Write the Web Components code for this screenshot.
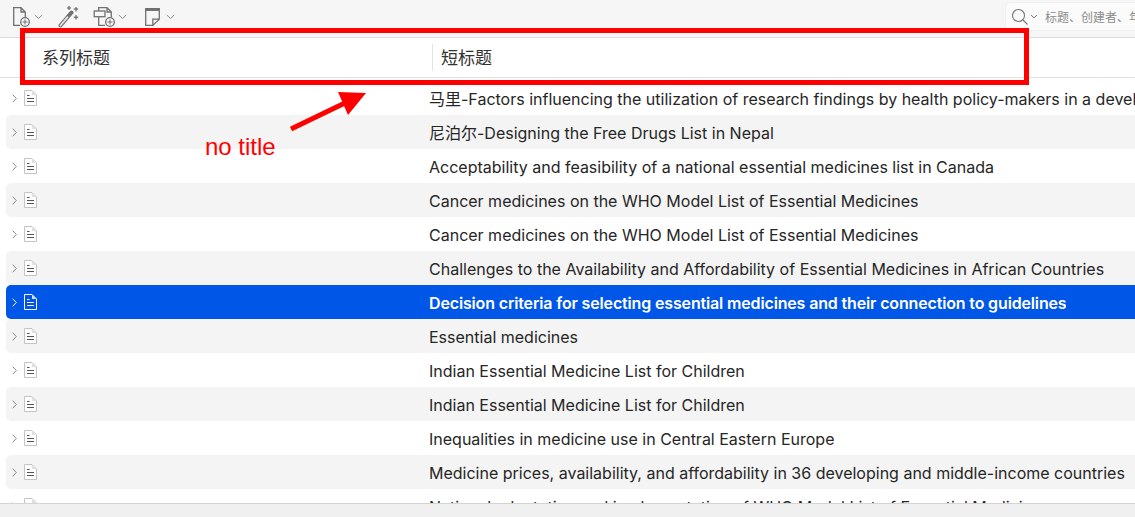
<!DOCTYPE html>
<html lang="zh">
<head>
<meta charset="utf-8">
<title>Library list</title>
<style>
  html, body { margin: 0; height: 517px; overflow: hidden; background: #fff; }
  body { font-family: Inter, "Noto Sans CJK SC", sans-serif; color: #262626; }
  app-shell { height: 517px; }
</style>
</head>
<body>
<app-shell>
  <app-toolbar></app-toolbar>
  <column-header></column-header>
  <ref-list>
    <ref-row>马里-Factors influencing the utilization of research findings by health policy-makers in a developing country</ref-row>
    <ref-row>尼泊尔-Designing the Free Drugs List in Nepal</ref-row>
    <ref-row>Acceptability and feasibility of a national essential medicines list in Canada</ref-row>
    <ref-row>Cancer medicines on the WHO Model List of Essential Medicines</ref-row>
    <ref-row>Cancer medicines on the WHO Model List of Essential Medicines</ref-row>
    <ref-row>Challenges to the Availability and Affordability of Essential Medicines in African Countries</ref-row>
    <ref-row selected>Decision criteria for selecting essential medicines and their connection to guidelines</ref-row>
    <ref-row>Essential medicines</ref-row>
    <ref-row>Indian Essential Medicine List for Children</ref-row>
    <ref-row>Indian Essential Medicine List for Children</ref-row>
    <ref-row>Inequalities in medicine use in Central Eastern Europe</ref-row>
    <ref-row>Medicine prices, availability, and affordability in 36 developing and middle-income countries</ref-row>
    <ref-row>National adaptation and implementation of WHO Model List of Essential Medicines</ref-row>
  </ref-list>
  <status-bar></status-bar>
  <note-overlay></note-overlay>
</app-shell>

<script>
class AppShell extends HTMLElement {
  constructor() {
    super();
    this.attachShadow({ mode: 'open' });
    this.shadowRoot.innerHTML = `
      <style>
        :host { display: flex; flex-direction: column; position: relative; overflow: hidden; }
      </style>
      <slot></slot>`;
  }
}

class AppToolbar extends HTMLElement {
  constructor() {
    super();
    this.attachShadow({ mode: 'open' });
    const chev = `<svg width="9" height="6" viewBox="0 0 9 6"><path d="M.8 1l3.700 3.500L8.200 1" fill="none" stroke="#8a8a8a" stroke-width="1"/></svg>`;
    this.shadowRoot.innerHTML = `
      <style>
        :host { display: flex; align-items: flex-start; justify-content: space-between; height: 37px; background: #f6f6f6; border-bottom: 1px solid #dcdcdc; flex: none; }
        .tools { display: flex; align-items: center; padding: 6px 0 0 12px; }
        .tool { display: flex; align-items: center; gap: 3px; }
        .tool svg { display: block; }
        .search { display: flex; align-items: center; width: 129px; height: 27px; margin-top: 3px; box-sizing: border-box; padding-left: 5px; background: #fbfbfb; border-radius: 5px 0 0 5px; box-shadow: 0 0 0 1px #f0f0f0; overflow: hidden; }
        .search svg { flex: none; }
        .search span { flex: none; font: 12px "Noto Sans CJK SC", sans-serif; color: #8c8c8c; white-space: nowrap; margin-left: 7px; }
      </style>
      <div class="tools">
        <div class="tool">
          <svg width="19" height="22" viewBox="0 0 19 22" fill="none" stroke="#707070" stroke-width="1.300">
            <path d="M8 19.400H1.700V1.700H9L13.300 6v5M9 1.700V6h4.300"/>
            <circle cx="13" cy="16" r="4.300"/><path d="M13 13.500v5M10.500 16h5" stroke-width="1"/>
          </svg>${chev}
        </div>
        <div class="tool" style="margin-left:14px">
          <svg width="22" height="22" viewBox="0 0 22 22" fill="none">
            <path d="M3.500 19.500L14.500 6.500" stroke="#707070" stroke-width="4" stroke-linecap="round"/>
            <path d="M3.500 19.500L10.500 11.200" stroke="#e4e4e4" stroke-width="1.800" stroke-linecap="round"/>
            <path d="M12 0v4M10 2h4M19 1v4.500M16.800 3h4.400M19 9v4.500M16.800 11.200h4.400" stroke="#555" stroke-width="1"/>
          </svg>
        </div>
        <div class="tool" style="margin-left:14px">
          <svg width="22" height="22" viewBox="0 0 22 22" fill="none" stroke="#707070" stroke-width="1.300">
            <path d="M12 19.400H5.700V11M5.700 5V1.700H14L18.300 6v5M14 1.700V6h4.300"/>
            <rect x="1.200" y="5" width="10.800" height="5.700"/>
            <circle cx="17" cy="16" r="4.300"/><path d="M17 13.500v5M14.500 16h5" stroke-width="1"/>
          </svg>${chev}
        </div>
        <div class="tool" style="margin-left:17px;gap:5px">
          <svg width="17" height="22" viewBox="0 0 17 22" fill="none" stroke="#707070" stroke-width="1.300">
            <path d="M1.700 2.700h13.600v10.500l-6.500 6.200H1.700zM8.800 19.400V13.200h6.500"/>
            <path d="M1.700 3.700h13.600" stroke-width="2.500"/>
          </svg>${chev}
        </div>
      </div>
      <div class="search">
        <svg width="18" height="18" viewBox="0 0 18 18" fill="none" stroke="#777" stroke-width="1.100"><circle cx="7.500" cy="7.500" r="6"/><path d="M12 12l4.500 4.500"/></svg>
        <svg width="8" height="5" viewBox="0 0 8 5" style="margin-left:1px"><path d="M1 1l3 2.800L7 1" fill="none" stroke="#777"/></svg>
        <span>标题、创建者、年</span>
      </div>`;
  }
}

class ColumnHeader extends HTMLElement {
  constructor() {
    super();
    this.attachShadow({ mode: 'open' });
    this.shadowRoot.innerHTML = `
      <style>
        :host { display: grid; grid-template-columns: 432px 1fr; align-items: center; height: 39px; background: #fff; border-bottom: 1px solid #e2e2e2; flex: none; font: 17px "Noto Sans CJK SC", sans-serif; color: #333; }
        div { height: 27px; line-height: 25px; }
        .a { padding-left: 42px; }
        .b { padding-left: 8px; border-left: 1px solid #e2e2e2; }
      </style>
      <div class="a">系列标题</div>
      <div class="b">短标题</div>`;
  }
}

class RefList extends HTMLElement {
  constructor() {
    super();
    this.attachShadow({ mode: 'open' });
    this.shadowRoot.innerHTML = `
      <style>
        :host { display: flex; flex-direction: column; flex: 1; min-height: 0; overflow: hidden; padding: 3px 0 0 6px; background: #fff; }
        ::slotted(ref-row:nth-child(even)) { background: #f4f4f4; }
        ::slotted(ref-row[selected]) { background: #0057e7; color: #fff; font-weight: 600; letter-spacing: -.15px; }
      </style>
      <slot></slot>`;
  }
}

class RefRow extends HTMLElement {
  constructor() {
    super();
    this.attachShadow({ mode: 'open' });
    const selected = this.hasAttribute('selected');
    const line = selected ? '#fff' : '#555';
    const edge = selected ? '#fff' : '#c4c4c4';
    const fold = selected ? '#cfe0ff' : '#e0e0e0';
    const paper = selected ? 'none' : '#fff';
    this.shadowRoot.innerHTML = `
      <style>
        :host { display: flex; align-items: flex-start; flex: none; height: 34px; border-radius: 5px 0 0 5px; font-size: 16px; white-space: nowrap; color: #262626; }
        svg { flex: none; }
        .chev { margin: 13px 0 0 6px; }
        .doc { margin: 9px 0 0 7px; }
        .title { margin-left: 392px; height: 34px; line-height: 36px; overflow: hidden; font-family: Inter, "Noto Sans CJK SC", sans-serif; }
      </style>
      <svg class="chev" width="5" height="9" viewBox="0 0 5 9"><path d="M.7.700L4.300 4.500.700 8.300" fill="none" stroke="${selected ? '#fff' : '#888'}" stroke-width="1"/></svg>
      <svg class="doc" width="13" height="16" viewBox="0 0 13 16">
        <path d="M.5.500H8L12.500 5v10.500H.500z" fill="${paper}" stroke="${edge}"/>
        <path d="M8 .5V5h4.500z" fill="${fold}"/>
        <path d="M3 5.500h2.500M3 8.500h7M3 11.500h7" stroke="${line}" stroke-width="1"/>
      </svg>
      <span class="title"><slot></slot></span>`;
  }
}

class StatusBar extends HTMLElement {
  constructor() {
    super();
    this.attachShadow({ mode: 'open' });
    this.shadowRoot.innerHTML = `
      <style>
        :host { display: block; height: 13px; flex: none; background: #f0f0f0; border-top: 1px solid #d4d4d4; }
      </style>`;
  }
}

// red markup drawn over the screenshot: box, arrow and the caption
class NoteOverlay extends HTMLElement {
  constructor() {
    super();
    this.attachShadow({ mode: 'open' });
    this.shadowRoot.innerHTML = `
      <style>
        :host { position: absolute; inset: 0; pointer-events: none; }
        .box { position: absolute; left: 20px; top: 28px; width: 1009px; height: 57px; box-sizing: border-box; border: 5px solid #ff0000; }
        svg { position: absolute; left: 285px; top: 88px; }
        .cap { position: absolute; left: 205px; top: 133px; font: 24px/28px "Liberation Sans", sans-serif; color: #ff0000; }
      </style>
      <div class="box"></div>
      <svg width="85" height="46" viewBox="0 0 85 46">
        <path d="M6 41L62 14" stroke="#ff0000" stroke-width="5"/>
        <path d="M53 4L81 5 63 27z" fill="#ff0000"/>
      </svg>
      <div class="cap">no title</div>`;
  }
}

customElements.define('app-shell', AppShell);
customElements.define('app-toolbar', AppToolbar);
customElements.define('column-header', ColumnHeader);
customElements.define('ref-list', RefList);
customElements.define('ref-row', RefRow);
customElements.define('status-bar', StatusBar);
customElements.define('note-overlay', NoteOverlay);
</script>
</body>
</html>
